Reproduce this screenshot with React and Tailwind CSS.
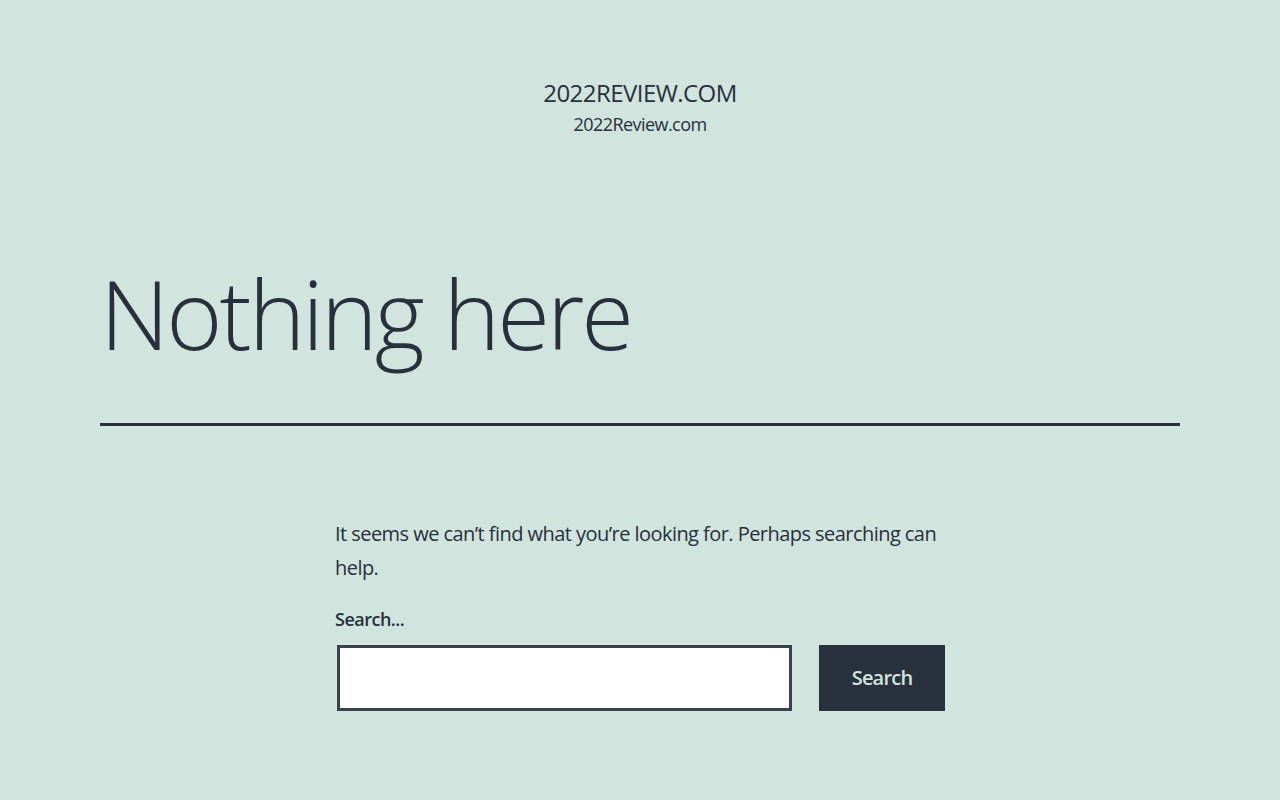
export default function App() {
  return (
    <div
      className="min-h-[800px] bg-[#d1e4dd] text-[#28303d]"
      style={{ fontFamily: '"Open Sans", "Noto Sans", sans-serif' }}
    >
      <header className="flex flex-col items-center pt-[77px]">
        <p className="text-[24px] leading-[31px] uppercase tracking-[-0.55px]">2022Review.com</p>
        <p className="mt-[4px] text-[18px] leading-[25px] tracking-[-0.55px]">2022Review.com</p>
      </header>

      <main className="px-[100px]">
        <div className="mt-[123px] border-b-[3px] border-[#28303d] pb-[57px]">
          <h1 className="text-[96px] font-light leading-[1.1] tracking-[-3px]">Nothing here</h1>
        </div>

        <div className="mx-auto mt-[91px] w-[610px]">
          <p className="text-[20px] leading-[34px] tracking-[-0.55px]">
            It seems we can’t find what you’re looking for. Perhaps searching can help.
          </p>
          <form className="mt-[20px]" onSubmit={(e) => e.preventDefault()}>
            <label htmlFor="s" className="block text-[18px] font-semibold leading-[28px] tracking-[-0.5px]">
              Search...
            </label>
            <div className="mt-[12px] flex">
              <input
                id="s"
                type="search"
                className="ml-[2px] h-[66px] w-[455px] border-[3px] border-[#39414d] bg-white px-3 text-[20px] outline-none"
              />
              <button
                type="submit"
                className="ml-[27px] h-[66px] w-[126px] bg-[#28303d] text-[20px] font-semibold tracking-[-0.8px] text-[#d1e4dd]"
              >
                Search
              </button>
            </div>
          </form>
        </div>
      </main>
    </div>
  );
}
